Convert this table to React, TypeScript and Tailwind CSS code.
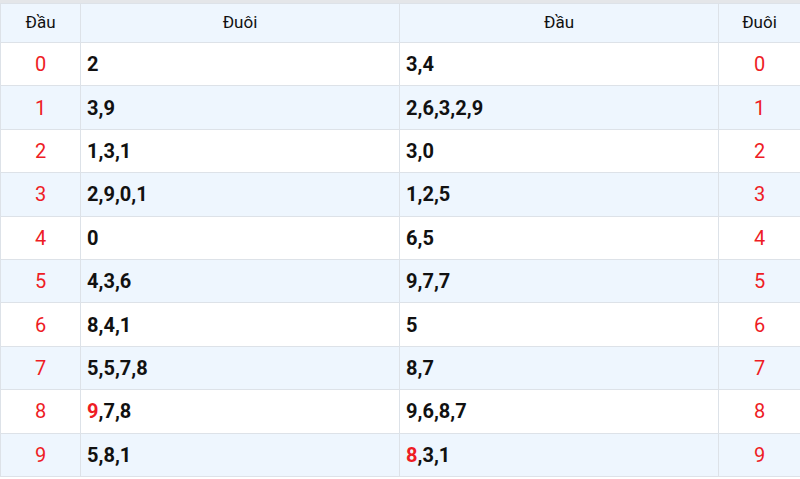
const rows: { d: string; t: string; h: string }[] = [
    { d: '0', t: '2', h: '3,4' },
    { d: '1', t: '3,9', h: '2,6,3,2,9' },
    { d: '2', t: '1,3,1', h: '3,0' },
    { d: '3', t: '2,9,0,1', h: '1,2,5' },
    { d: '4', t: '0', h: '6,5' },
    { d: '5', t: '4,3,6', h: '9,7,7' },
    { d: '6', t: '8,4,1', h: '5' },
    { d: '7', t: '5,5,7,8', h: '8,7' },
    { d: '8', t: '9,7,8', h: '9,6,8,7' },
    { d: '9', t: '5,8,1', h: '8,3,1' },
];

const Nums = ({ value, mark }: { value: string; mark: string }) => (
    <>
        {value.split(',').map((n, i) => (
            <span key={i}>
                {i > 0 && ','}
                <span className={n === mark ? 'text-[#ee1c25]' : ''}>{n}</span>
            </span>
        ))}
    </>
);

export default function App() {
    return (
        <div className="w-[800px] h-[479px] bg-white border-t-[3px] border-[#e4e6e9] font-['Roboto',sans-serif] overflow-hidden">
            <table className="w-full border-collapse table-fixed text-[#111]">
                <colgroup>
                    <col className="w-[80px]" />
                    <col className="w-[319px]" />
                    <col className="w-[319px]" />
                    <col className="w-[82px]" />
                </colgroup>
                <thead>
                    <tr className="h-[39px] bg-[#eef6fe] text-[17px]">
                        <th className="border border-[#dde2e8] font-normal">Đầu</th>
                        <th className="border border-[#dde2e8] font-normal">Đuôi</th>
                        <th className="border border-[#dde2e8] font-normal">Đầu</th>
                        <th className="border border-[#dde2e8] font-normal">Đuôi</th>
                    </tr>
                </thead>
                <tbody>
                    {rows.map((r, i) => (
                        <tr key={r.d} className={i % 2 ? 'h-[43.4px] bg-[#eef6fe]' : 'h-[43.4px] bg-white'}>
                            <td className="border border-[#dde2e8] text-center text-[20px] text-[#ee1c25]">{r.d}</td>
                            <td className="border border-[#dde2e8] pl-[6px] text-[20px] font-bold">
                                <Nums value={r.t} mark={i === 8 ? '9' : ''} />
                            </td>
                            <td className="border border-[#dde2e8] pl-[6px] text-[20px] font-bold">
                                <Nums value={r.h} mark={i === 9 ? '8' : ''} />
                            </td>
                            <td className="border border-[#dde2e8] text-center text-[20px] text-[#ee1c25]">{r.d}</td>
                        </tr>
                    ))}
                </tbody>
            </table>
        </div>
    );
}
